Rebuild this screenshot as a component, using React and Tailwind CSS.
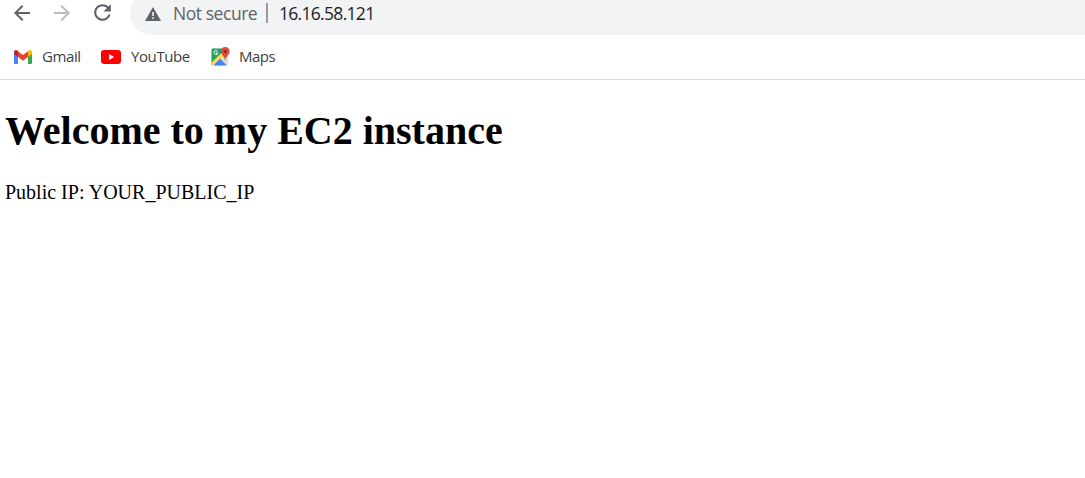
const ui = "font-['Open_Sans','Noto_Sans',sans-serif] whitespace-pre";

function Toolbar() {
  return (
    <div className="flex h-[35px] items-end overflow-hidden">
      <div className="flex h-[43px] w-[130px] shrink-0 items-center gap-4 pb-[2px] pl-[10px]">
        <svg className="size-6 shrink-0" viewBox="0 0 24 24" fill="#5f6368">
          <path d="M20 11H7.83l5.59-5.59L12 4l-8 8 8 8 1.41-1.41L7.83 13H20v-2z" />
        </svg>
        <svg className="size-6 shrink-0" viewBox="0 0 24 24" fill="#babcbe">
          <path d="M12 4l-1.41 1.41L16.17 11H4v2h12.17l-5.58 5.59L12 20l8-8z" />
        </svg>
        <svg className="size-[25px] shrink-0" viewBox="0 0 24 24" fill="#5f6368">
          <path d="M17.65 6.35A7.96 7.96 0 0 0 12 4a8 8 0 1 0 7.73 10h-2.08A6 6 0 1 1 12 6c1.66 0 3.14.69 4.22 1.78L13 11h7V4l-2.35 2.35z" />
        </svg>
      </div>
      <div className="flex h-[43px] flex-1 items-center rounded-l-full bg-[#f1f3f4] pl-[15px]">
        <svg className="h-[14px] w-4 shrink-0" viewBox="0 0 16 14">
          <path d="M8 0l8 14H0z" fill="#5f6368" />
          <path d="M7.2 5h1.6v4H7.2zM7.2 10.3h1.6v1.6H7.2z" fill="#f1f3f4" />
        </svg>
        <span className={`${ui} mb-px ml-[12px] w-[93px] shrink-0 text-[17.5px] leading-6 tracking-[-0.45px] text-[#5f6368]`}>Not secure</span>
        <span className="mb-px h-5 w-[2px] shrink-0 bg-[#9a9da0]" />
        <span className={`${ui} mb-px ml-[11px] text-[17.5px] leading-6 tracking-[-0.7px] text-[#202124]`}>16.16.58.121</span>
      </div>
    </div>
  );
}

function GmailIcon() {
  return (
    <svg className="h-[14px] w-[18px]" viewBox="0 0 18 14">
      <path d="M0 3v9.7C0 13.4.6 14 1.3 14H4V6z" fill="#4285f4" />
      <path d="M18 3v9.7c0 .7-.6 1.3-1.3 1.3H14V6z" fill="#34a853" />
      <path d="M14 1.3V7l4-3V2c0-1.8-2-2.6-3.3-1.5z" fill="#fbbc04" />
      <path d="M4 7V1.3l5 3.8 5-3.8V7l-5 3.8z" fill="#ea4335" />
      <path d="M0 2v2l4 3V1.3L3.3.5C2-.6 0 .2 0 2z" fill="#c5221f" />
    </svg>
  );
}

function YouTubeIcon() {
  return (
    <svg className="h-[14px] w-5" viewBox="0 0 20 14">
      <rect width="20" height="14" rx="3.2" fill="#f00" />
      <path d="M8 4v6l5.2-3z" fill="#fff" />
    </svg>
  );
}

function MapsIcon() {
  return (
    <svg className="mb-px h-[19px] w-[19px]" viewBox="0 0 19 19">
      <rect x="0.5" y="1.5" width="16.5" height="17" rx="1.5" fill="#e5e5e5" />
      <path d="M.5 16V3A1.5 1.5 0 0 1 2 1.5h11L14 5 .5 18z" fill="#1ea362" />
      <path d="M.5 15.5L11.5 5l3 2.5L1.7 18.5C1 18.5.5 18 .5 17z" fill="#ffd84d" />
      <path d="M2.4 18.5l6.8-7 6.6 7z" fill="#4285f4" />
      <path d="M10 11.7l7 6.3V8.5l-3.6.1z" fill="#dadada" />
      <path d="M6.6 4.3A2 2 0 1 0 7 6H5" fill="none" stroke="#fff" strokeWidth="1" />
      <path d="M14.2 0a4.4 4.4 0 0 0-4.4 4.4c0 3.2 3.6 4.2 4.4 9 .8-4.8 4.5-5.8 4.5-9A4.4 4.4 0 0 0 14.2 0z" fill="#de4b3e" />
      <circle cx="14.2" cy="4.4" r="1.5" fill="#7d2820" />
    </svg>
  );
}

function Bookmarks() {
  const label = `${ui} mb-[2px] text-[15px] leading-5 text-[#3c4043]`;
  return (
    <div className="flex h-[45px] items-center border-b border-[#d9dbde] pl-[14px]">
      <div className="flex w-[87px] shrink-0 items-center gap-[10px]">
        <GmailIcon />
        <span className={`${label} tracking-[-0.4px]`}>Gmail</span>
      </div>
      <div className="flex w-[109.5px] shrink-0 items-center gap-[10px]">
        <YouTubeIcon />
        <span className={`${label} tracking-[-0.4px]`}>YouTube</span>
      </div>
      <div className="flex items-center gap-[9.5px]">
        <MapsIcon />
        <span className={`${label} tracking-[-0.5px]`}>Maps</span>
      </div>
    </div>
  );
}

export default function App() {
  return (
    <div className="h-[478px] overflow-hidden bg-white">
      <Toolbar />
      <Bookmarks />
      <main className="pt-[28px] pl-[5px] font-['Liberation_Serif',serif] text-black">
        <h1 className="text-[40px] leading-[46px] font-bold">Welcome to my EC2 instance</h1>
        <p className="mt-[27px] text-[20px] leading-[23px]">Public IP: YOUR_PUBLIC_IP</p>
      </main>
    </div>
  );
}
